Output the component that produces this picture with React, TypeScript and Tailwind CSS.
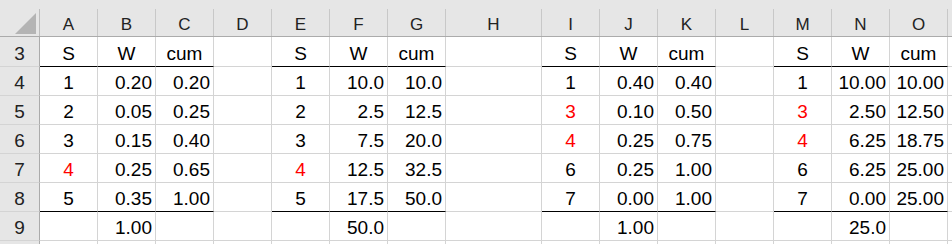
import React from 'react';

type Table = {
  s: string[];
  w: string[];
  cum: string[];
  red: number[];
  total: string;
};

const COLS = ['A', 'B', 'C', 'D', 'E', 'F', 'G', 'H', 'I', 'J', 'K', 'L', 'M', 'N', 'O'];

const TABLES: Table[] = [
  { s: ['1', '2', '3', '4', '5'], w: ['0.20', '0.05', '0.15', '0.25', '0.35'], cum: ['0.20', '0.25', '0.40', '0.65', '1.00'], red: [3], total: '1.00' },
  { s: ['1', '2', '3', '4', '5'], w: ['10.0', '2.5', '7.5', '12.5', '17.5'], cum: ['10.0', '12.5', '20.0', '32.5', '50.0'], red: [3], total: '50.0' },
  { s: ['1', '3', '4', '6', '7'], w: ['0.40', '0.10', '0.25', '0.25', '0.00'], cum: ['0.40', '0.50', '0.75', '1.00', '1.00'], red: [1, 2], total: '1.00' },
  { s: ['1', '3', '4', '6', '7'], w: ['10.00', '2.50', '6.25', '6.25', '0.00'], cum: ['10.00', '12.50', '18.75', '25.00', '25.00'], red: [1, 2], total: '25.0' },
];

// row 10 is only a sliver at the bottom edge, so its label is left out
const ROWS = [3, 4, 5, 6, 7, 8, 9, 10];

const font = { fontFamily: '"Liberation Sans", Arial, sans-serif' };

function cellFor(row: number, col: number) {
  const t = TABLES[Math.floor(col / 4)];
  const pos = col % 4;
  if (pos === 3 || !t) return { text: '', center: false, red: false, rule: false };
  const rule = row === 3 || row === 8;
  if (row === 3) return { text: ['S', 'W', 'cum'][pos], center: true, red: false, rule };
  if (row >= 4 && row <= 8) {
    const i = row - 4;
    if (pos === 0) return { text: t.s[i], center: true, red: t.red.includes(i), rule };
    if (pos === 1) return { text: t.w[i], center: false, red: false, rule };
    return { text: t.cum[i], center: false, red: false, rule };
  }
  if (row === 9 && pos === 1) return { text: t.total, center: false, red: false, rule: false };
  return { text: '', center: false, red: false, rule: false };
}

function HeaderRow() {
  return (
    <div className="bg-[#e6e6e6]">
      <div className="h-[9px]" />
      <div className="flex h-[28px] border-b border-[#ababab]">
        <div className="w-[40px] shrink-0 border-r border-[#bdbdbd] relative">
          <svg className="absolute left-[15px] top-[4px]" width="22" height="21" viewBox="0 0 22 21">
            <polygon points="0,21 21,21 21,0" fill="#b4b4b4" />
          </svg>
        </div>
        {COLS.map((c) => (
          <div
            key={c}
            className={`${c === 'H' ? 'w-[96px]' : 'w-[58px]'} shrink-0 border-r border-[#c8c8c8] flex items-end justify-center pb-[1px] text-[17px] leading-[20px] text-[#222]`}
          >
            {c}
          </div>
        ))}
        <div className="flex-1" />
      </div>
    </div>
  );
}

function DataRow({ row }: { row: number }) {
  const h = row === 3 ? 'h-[30px]' : 'h-[29px]';
  return (
    <div className={`flex ${h}`}>
      <div className="w-[40px] shrink-0 bg-[#e6e6e6] border-r border-b border-r-[#ababab] border-b-[#d4d4d4] flex items-end justify-center pb-[2px] text-[19px] leading-[20px] text-[#222]">
        {row < 10 ? row : ''}
      </div>
      {COLS.map((c, ci) => {
        const cell = cellFor(row, ci);
        return (
          <div
            key={c}
            className={`${c === 'H' ? 'w-[96px]' : 'w-[58px]'} shrink-0 border-r border-b border-r-[#d4d4d4] ${
              cell.rule ? 'border-b-black' : 'border-b-[#d4d4d4]'
            } flex items-end pb-[2px] text-[19px] leading-[20px] whitespace-nowrap ${
              cell.center ? 'justify-center' : 'justify-end pr-[3px]'
            } ${cell.red ? 'text-[#ff0000]' : 'text-black'}`}
          >
            {cell.text}
          </div>
        );
      })}
      <div className="flex-1 border-b border-[#d4d4d4]" />
    </div>
  );
}

export default function App() {
  return (
    <div className="w-[952px] h-[244px] overflow-hidden bg-white" style={font}>
      <HeaderRow />
      {ROWS.map((r) => (
        <DataRow key={r} row={r} />
      ))}
    </div>
  );
}
